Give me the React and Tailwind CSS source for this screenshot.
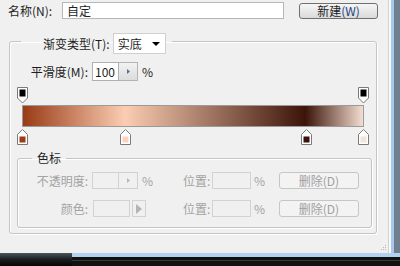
import React from "react";

/* ================= STOPS ================= */

const TopStop = ({ left }) => (
  <svg
    className="absolute top-0"
    style={{ left }}
    width="11"
    height="17"
    viewBox="0 0 11 17"
  >
    <path d="M0.5 0.5H10.5V11L5.5 16L0.5 11Z" fill="#fff" stroke="#7a7a7a" />
    <rect x="2.5" y="2.5" width="6" height="7" fill="#000" />
  </svg>
);

const BottomStop = ({ left, color }) => (
  <svg
    className="absolute top-[2px]"
    style={{ left }}
    width="11"
    height="16"
    viewBox="0 0 11 16"
  >
    <path d="M5.5 0.5L10.5 5.5V15.5H0.5V5.5Z" fill="#fff" stroke="#7a7a7a" />
    <rect x="2.5" y="7.5" width="6" height="6" fill={color} />
  </svg>
);

/* ================= SMALL CONTROLS ================= */

const Spinner = ({ disabled }) => (
  <div
    className={`w-[19px] h-full flex items-center justify-center border-y border-r ${
      disabled
        ? "border-[#d0d0d0] bg-[#f0f0f0]"
        : "border-[#b4b4b4] bg-gradient-to-b from-[#f2f2f2] to-[#dcdcdc]"
    }`}
  >
    <svg width="3" height="5" viewBox="0 0 3 5">
      <path d="M0 0L3 2.5L0 5Z" fill={disabled ? "#b8b8b8" : "#5a7090"} />
    </svg>
  </div>
);

const PositionFields = () => (
  <>
    <span className="w-[29px]">位置:</span>
    <div className="w-[39px] h-[17px] border border-[#d2d2d2] bg-[#f0f0f0]" />
    <span className="w-[28px] pl-[3px]">%</span>
    <button className="w-[80px] h-[17px] rounded-[3px] border border-[#c6c6c6] bg-[#f3f3f3] text-[#a0a0a0] leading-[15px]">
      删除(D)
    </button>
  </>
);

/* ================= MAIN ================= */

export default function App() {
  return (
    <div className="w-[400px] h-[266px] overflow-hidden flex flex-col bg-[#7b8896] font-['Noto_Sans_CJK_SC',sans-serif] text-[12px] leading-[14px] text-[#1e1e1e]">
      <div className="flex h-[253px]">
        {/* DIALOG */}
        <div className="relative w-[388px] h-full bg-[#f0f0f0]">
          {/* NAME ROW */}
          <div className="flex items-start pt-[2px] pl-[8px]">
            <span className="w-[54px] leading-[18px]">名称(N):</span>
            <div className="w-[222px] h-[17px] bg-white border border-[#b5b7bd] pl-[4px] leading-[15px]">
              自定
            </div>
            <button className="ml-[15px] mt-[1px] w-[79px] h-[16px] rounded-[3px] border border-[#707070] bg-gradient-to-b from-[#f6f6f6] to-[#dadada] leading-[14px]">
              新建<span className="text-[#23427e]">(W)</span>
            </button>
          </div>

          {/* GRADIENT GROUP */}
          <fieldset className="ml-[9px] mt-[13px] w-[368px] h-[201px] border border-[#c4c4c4] rounded-[3px] shadow-[inset_1px_1px_0_#fff,1px_1px_0_#fff]">
            <legend className="ml-[11px] pl-[22px] pr-[6px] flex items-start h-[17px]">
              <span className="leading-[21px]">渐变类型(T):</span>
              <div className="ml-[3px] w-[53px] h-[21px] bg-white border border-[#d0d0d0] flex items-center justify-between pl-[4px] pr-[5px]">
                <span>实底</span>
                <svg width="8" height="4" viewBox="0 0 8 4">
                  <path d="M0 0H8L4 4Z" fill="#000" />
                </svg>
              </div>
            </legend>

            {/* SMOOTHNESS */}
            <div className="flex items-start mt-[12px] h-[19px] leading-[19px]">
              <span className="w-[78px] text-right">平滑度(M):</span>
              <div className="ml-[4px] flex h-[19px]">
                <div className="w-[27px] h-full bg-white border border-[#b0b0b0] pl-[2px] leading-[17px]">
                  100
                </div>
                <Spinner />
              </div>
              <span className="ml-[4px]">%</span>
            </div>

            {/* GRADIENT BAR */}
            <div className="ml-[12px] mt-[6px] w-[342px] flex flex-col">
              <div className="relative h-[18px]">
                <TopStop left={-5} />
                <TopStop left={336} />
              </div>
              <div className="h-[22px] border border-[#9a9a9a] bg-[linear-gradient(to_right,#993b16_0%,#fbcdb2_30%,#3c1409_83%,#f4ded1_100%)]" />
              <div className="relative h-[17px]">
                <BottomStop left={-5} color="#9c3d16" />
                <BottomStop left={98} color="#fbd3bb" />
                <BottomStop left={279} color="#3a1208" />
                <BottomStop left={336} color="#f6e2d6" />
              </div>
            </div>

            {/* COLOR STOP GROUP */}
            <fieldset className="ml-[7px] mt-[7px] w-[355px] h-[77px] border border-[#c4c4c4] rounded-[3px] shadow-[inset_1px_1px_0_#fff,1px_1px_0_#fff]">
              <legend className="ml-[14px] px-[5px] leading-[14px]">色标</legend>

              <div className="flex items-start mt-[7px] h-[17px] leading-[17px] text-[#a3a3a3]">
                <span className="w-[70px] text-right">不透明度:</span>
                <div className="ml-[4px] flex h-[17px]">
                  <div className="w-[27px] h-full border border-[#d2d2d2] bg-[#f0f0f0]" />
                  <Spinner disabled />
                </div>
                <span className="w-[45px] pl-[4px]">%</span>
                <PositionFields />
              </div>

              <div className="flex items-start mt-[11px] h-[17px] leading-[17px] text-[#a3a3a3]">
                <span className="w-[70px] text-right">颜色:</span>
                <div className="ml-[5px] w-[37px] h-[17px] border border-[#d2d2d2] bg-[#f0f0f0]" />
                <div className="ml-[2px] w-[14px] h-[17px] border border-[#d2d2d2] bg-[#f0f0f0] flex items-center justify-center">
                  <svg width="6" height="10" viewBox="0 0 6 10">
                    <path d="M0 0L6 5L0 10Z" fill="#b4b4b4" />
                  </svg>
                </div>
                <span className="w-[37px]" />
                <PositionFields />
              </div>
            </fieldset>
          </fieldset>

          {/* RESIZE GRIP */}
          <svg className="absolute right-[1px] bottom-[2px]" width="7" height="7" viewBox="0 0 7 7">
            <rect x="5" y="1" width="1" height="1" fill="#b8b8b8" />
            <rect x="3" y="3" width="1" height="1" fill="#b8b8b8" />
            <rect x="5" y="3" width="1" height="1" fill="#b8b8b8" />
            <rect x="1" y="5" width="1" height="1" fill="#b8b8b8" />
            <rect x="3" y="5" width="1" height="1" fill="#b8b8b8" />
            <rect x="5" y="5" width="1" height="1" fill="#b8b8b8" />
          </svg>
        </div>

        {/* RIGHT FRAME */}
        <div className="w-[1px] bg-[#d2d2d2]" />
        <div className="w-[2px] bg-[#f7f9fb]" />
        <div className="w-[3px] bg-[#a7c8ea]" />
        <div className="flex-1 bg-[#6f7f8f]" />
      </div>

      {/* BOTTOM STRIP */}
      <div className="flex h-[13px]">
        <div className="w-[72px] bg-gradient-to-b from-[#50565c] via-[#1b1d20] to-[#050505]" />
        <div className="flex-1 flex flex-col bg-[#111]">
          <div className="h-[4px] bg-[#b4d2f0]" />
          <div className="h-[1px] mt-[3px] bg-[#3a3a3a]" />
        </div>
      </div>
    </div>
  );
}
